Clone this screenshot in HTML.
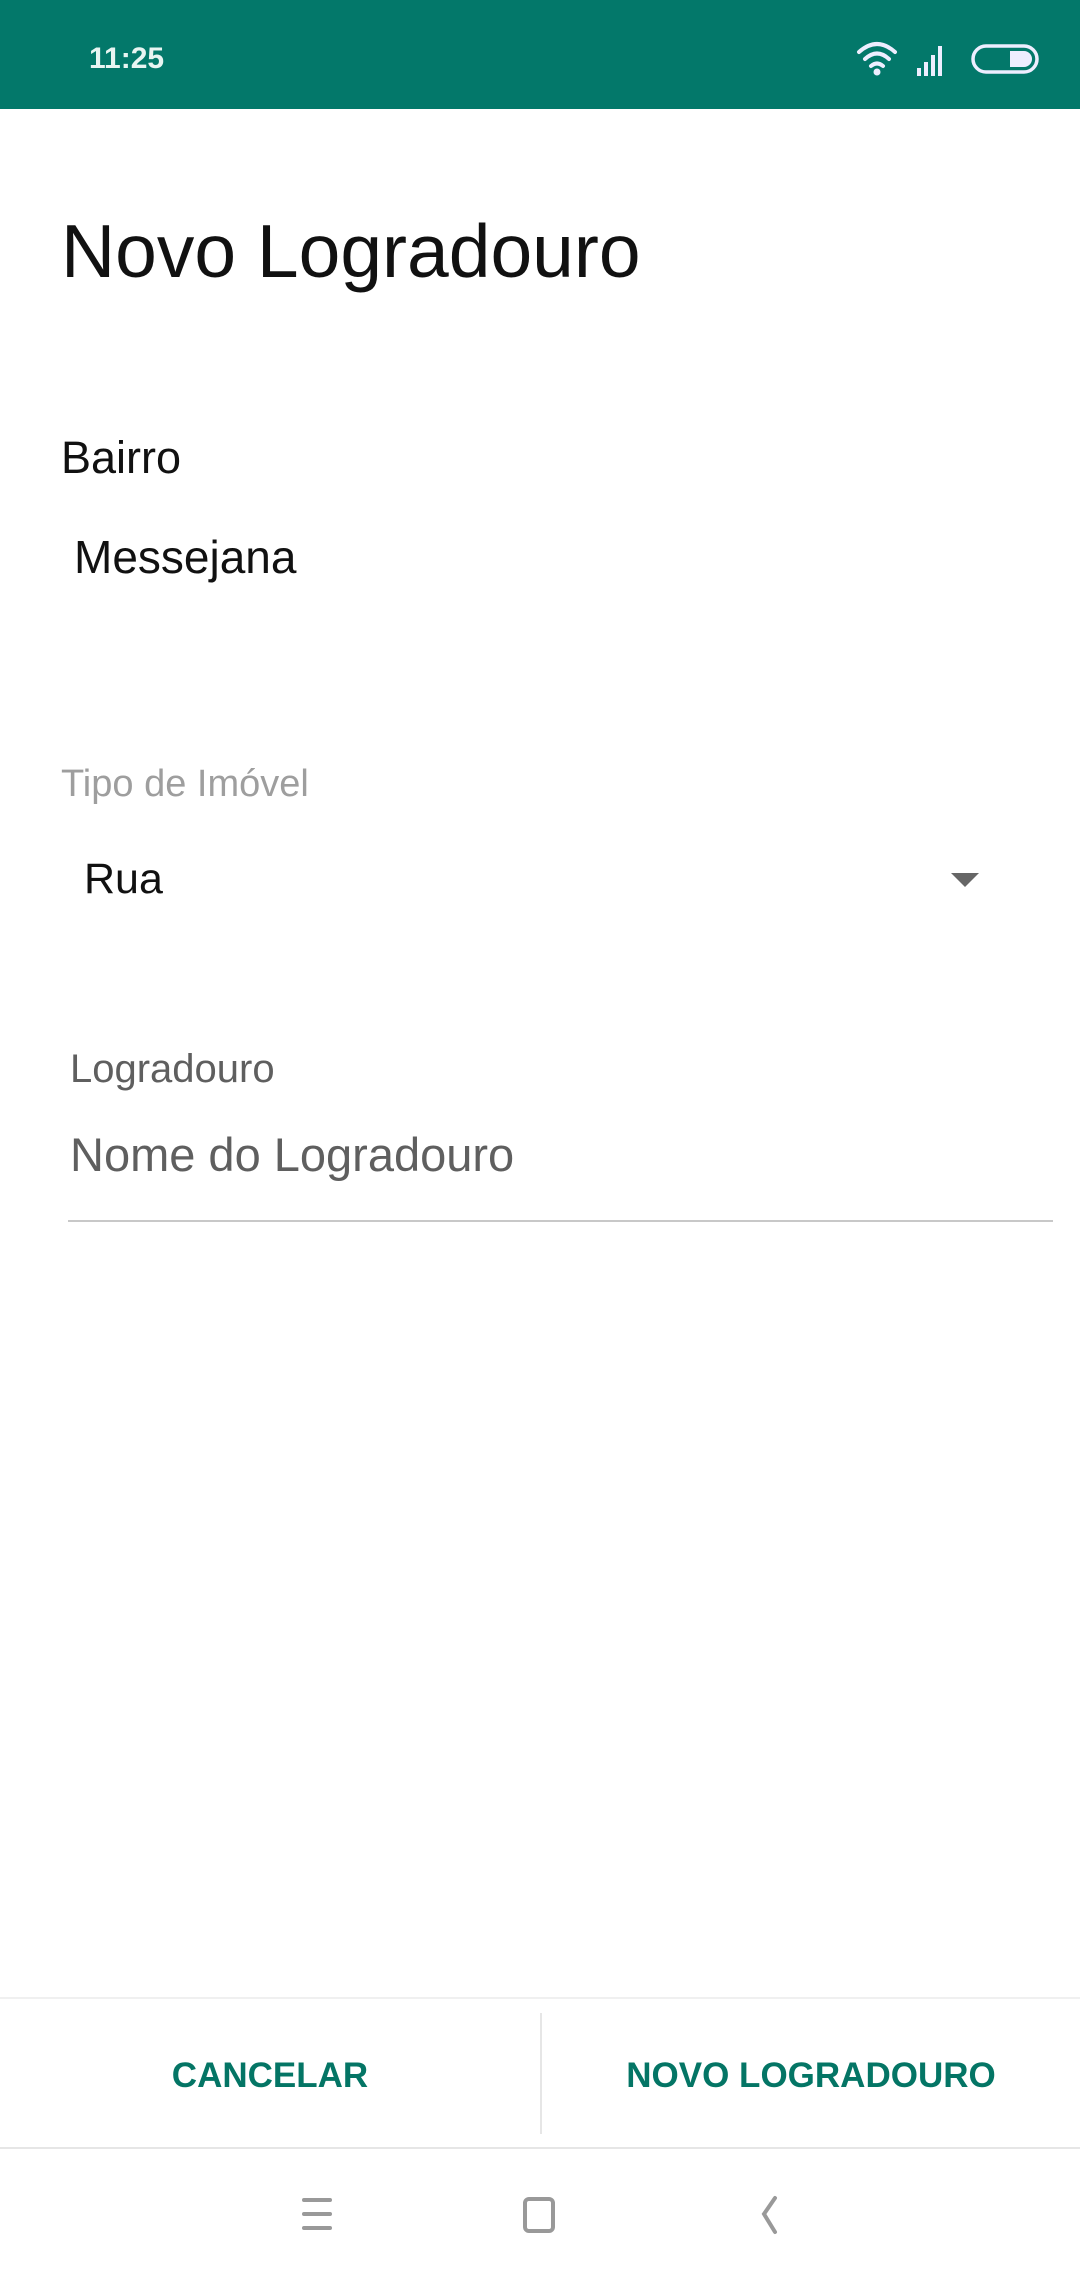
<!DOCTYPE html>
<html><head><meta charset="utf-8"><style>
*{margin:0;padding:0;box-sizing:border-box}
body{width:1080px;height:2280px;background:#fff;font-family:"Liberation Sans",sans-serif;position:relative;overflow:hidden}
.abs{position:absolute;white-space:nowrap}
</style></head><body>
<div class="abs" style="left:0;top:0;width:1080px;height:109px;background:#03786a"></div>
<div class="abs" style="left:89px;top:42px;font-size:30px;font-weight:bold;color:#e8f5f2">11:25</div>
<svg class="abs" style="left:855px;top:38px" width="185" height="40" viewBox="0 0 185 40">
 <g fill="none" stroke="#eef" stroke-width="4" stroke-linecap="round">
  <path d="M4 14 Q22 -2 40 14"/><path d="M10 21 Q22 10 34 21"/><path d="M16 28 Q22 23 28 28"/>
 </g>
 <circle cx="22" cy="34" r="3.5" fill="#eef"/>
 <rect x="62" y="30" width="4" height="8" fill="#eef"/><rect x="69" y="24" width="4" height="14" fill="#eef"/><rect x="76" y="17" width="4" height="21" fill="#eef"/><rect x="83" y="8" width="4" height="30" fill="#eef"/>
 <rect x="118" y="8" width="64" height="26" rx="13" fill="none" stroke="#eef" stroke-width="3.5"/>
 <path d="M155 13 h14 a8 8 0 0 1 0 16 h-14z" fill="#eef"/>
</svg>
<div class="abs" style="left:61px;top:208px;font-size:75px;color:#111">Novo Logradouro</div>
<div class="abs" style="left:61px;top:432px;font-size:45px;color:#111">Bairro</div>
<div class="abs" style="left:74px;top:530px;font-size:46px;color:#111">Messejana</div>
<div class="abs" style="left:61px;top:763px;font-size:38px;color:#9e9e9e">Tipo de Imóvel</div>
<div class="abs" style="left:84px;top:855px;font-size:43px;color:#111">Rua</div>
<svg class="abs" style="left:951px;top:873px" width="28" height="14"><path d="M0 0h28L14 14z" fill="#666"/></svg>
<div class="abs" style="left:70px;top:1047px;font-size:40px;color:#5f5f5f">Logradouro</div>
<div class="abs" style="left:70px;top:1127px;font-size:47px;color:#5f5f5f">Nome do Logradouro</div>
<div class="abs" style="left:68px;top:1220px;width:985px;height:2px;background:#c8c8c8"></div>
<div class="abs" style="left:0;top:1997px;width:1080px;height:2px;background:#f0f0f0"></div>
<div class="abs" style="left:540px;top:2013px;width:2px;height:121px;background:#e6e6e6"></div>
<div class="abs" style="left:0;top:2147px;width:1080px;height:2px;background:#e6e6e6"></div>
<div class="abs" style="left:0;top:2056px;width:540px;text-align:center;font-size:35px;font-weight:bold;color:#047565">CANCELAR</div>
<div class="abs" style="left:542px;top:2056px;width:538px;text-align:center;font-size:35px;font-weight:bold;color:#047565">NOVO LOGRADOURO</div>
<svg class="abs" style="left:300px;top:2190px" width="500" height="50" viewBox="0 0 500 50">
 <g stroke="#999" stroke-width="4" fill="none" stroke-linecap="round">
  <path d="M4 10h26M4 24h26M4 38h26"/>
  <rect x="225" y="9" width="28" height="32" rx="4"/>
  <path d="M475 8L464 24L475 42"/>
 </g>
</svg>
</body></html>
